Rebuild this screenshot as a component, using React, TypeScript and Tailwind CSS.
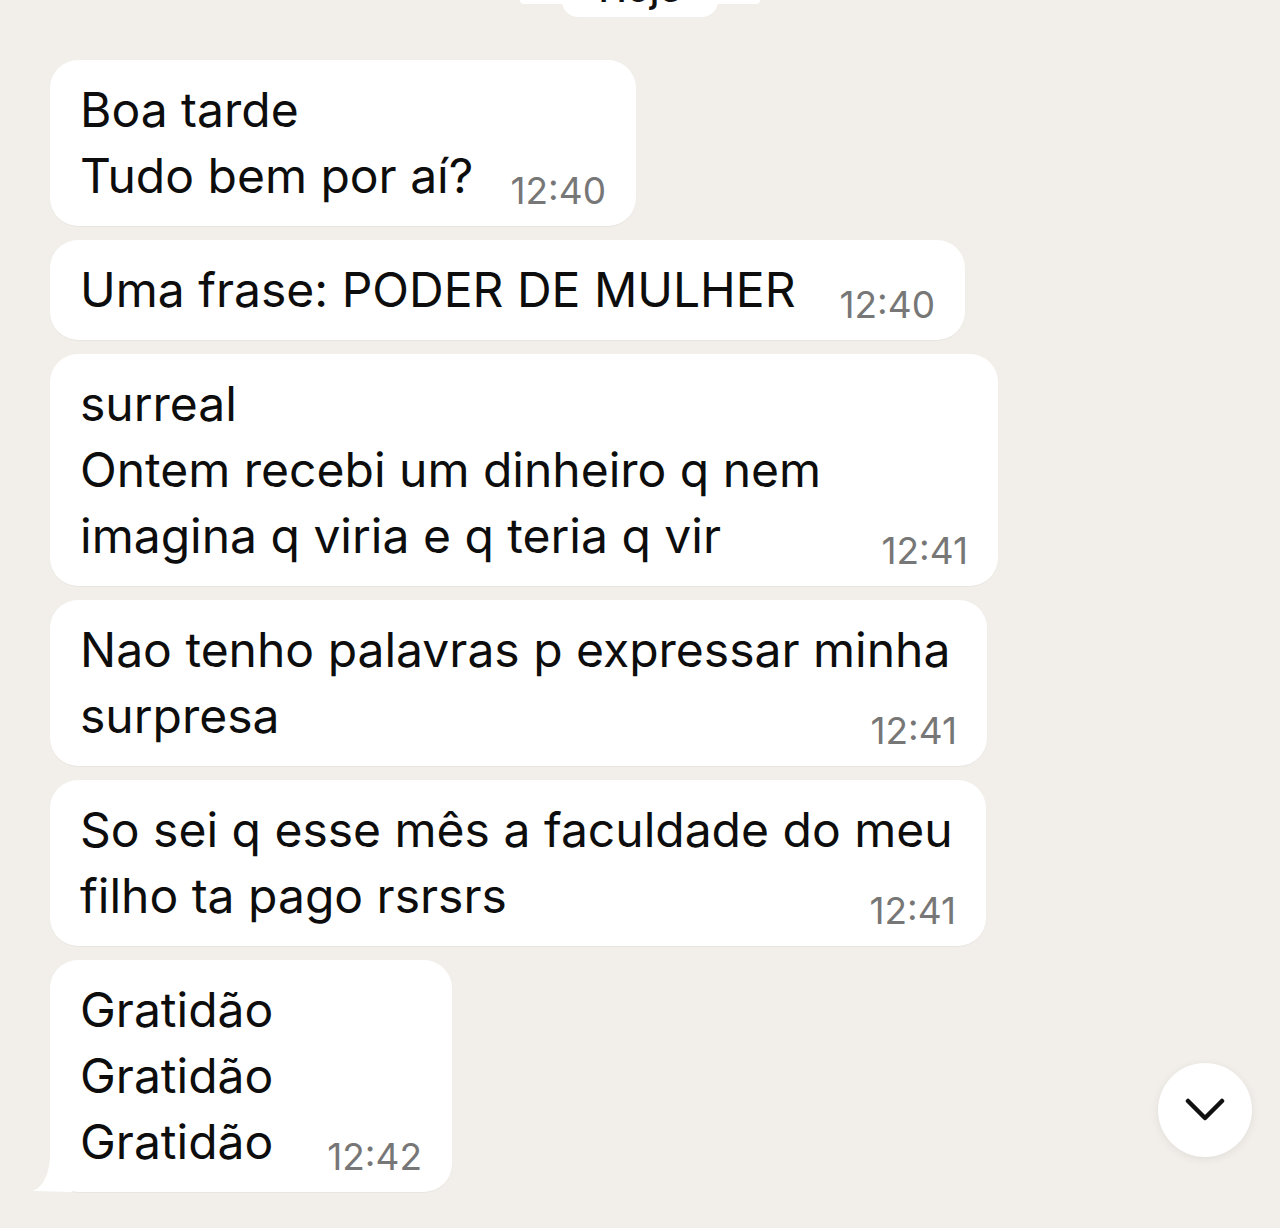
const FONT = "font-['Inter','Noto_Sans',sans-serif]";

type Msg = { lines: string[]; time: string; width: number };

const messages: Msg[] = [
  { lines: ['Boa tarde', 'Tudo bem por aí?'], time: '12:40', width: 586 },
  { lines: ['Uma frase: PODER DE MULHER'], time: '12:40', width: 915 },
  { lines: ['surreal', 'Ontem recebi um dinheiro q nem', 'imagina q viria e q teria q vir'], time: '12:41', width: 948 },
  { lines: ['Nao tenho palavras p expressar minha', 'surpresa'], time: '12:41', width: 937 },
  { lines: ['So sei q esse mês a faculdade do meu', 'filho ta pago rsrsrs'], time: '12:41', width: 936 },
  { lines: ['Gratidão', 'Gratidão', 'Gratidão'], time: '12:42', width: 402 },
];

function Bubble({ msg, tail }: { msg: Msg; tail?: boolean }) {
  const last = msg.lines.length - 1;
  return (
    <div
      className="relative bg-white rounded-[28px] pl-[30px] pr-[30px] py-[17px] text-[#0d0d0d] shadow-[0_1px_1px_rgba(0,0,0,0.04)]"
      style={{ width: msg.width }}
    >
      {msg.lines.map((line, i) =>
        i < last ? (
          <div key={i} className="text-[48px] leading-[66px] whitespace-nowrap">
            {line}
          </div>
        ) : (
          <div key={i} className="flex items-start justify-between">
            <span className="text-[48px] leading-[66px] whitespace-nowrap">{line}</span>
            <span className="mt-[29px] text-[37px] leading-[37px] text-[#777] whitespace-nowrap">
              {msg.time}
            </span>
          </div>
        )
      )}
      {tail && (
        <svg
          className="absolute left-[-18px] bottom-0"
          width="60"
          height="48"
          viewBox="0 0 60 48"
        >
          <path d="M18 0 L40 0 L40 48 L1 47 C11 42 17 32 18 12 Z" fill="#fff" />
        </svg>
      )}
    </div>
  );
}

export default function App() {
  return (
    <div className={`relative w-[1280px] h-[1228px] overflow-hidden bg-[#f2efea] ${FONT}`}>
      {/* date pill, mostly scrolled out of view */}
      <div className="flex justify-center">
        <div className="w-[240px] h-[4px] bg-white rounded-b-[14px]" />
      </div>
      <div className="flex justify-center -mt-[4px]">
        <div className="w-[156px] h-[17px] bg-white rounded-b-[16px] overflow-hidden flex justify-center">
          <span className="-mt-[34px] text-[38px] leading-[44px] text-[#111] font-medium">Hoje</span>
        </div>
      </div>

      <div className="flex flex-col items-start gap-[14px] pl-[50px] pt-[43px]">
        {messages.map((m, i) => (
          <Bubble key={i} msg={m} tail={i === messages.length - 1} />
        ))}
      </div>

      {/* scroll to bottom */}
      <button className="absolute left-[1158px] top-[1063px] w-[94px] h-[94px] rounded-full bg-white flex items-center justify-center shadow-[0_2px_10px_rgba(0,0,0,0.07)]">
        <svg width="40" height="26" viewBox="0 0 40 26" fill="none">
          <path d="M3 4 L20 21 L37 4" stroke="#111" strokeWidth="4.5" strokeLinecap="round" strokeLinejoin="round" />
        </svg>
      </button>
    </div>
  );
}
